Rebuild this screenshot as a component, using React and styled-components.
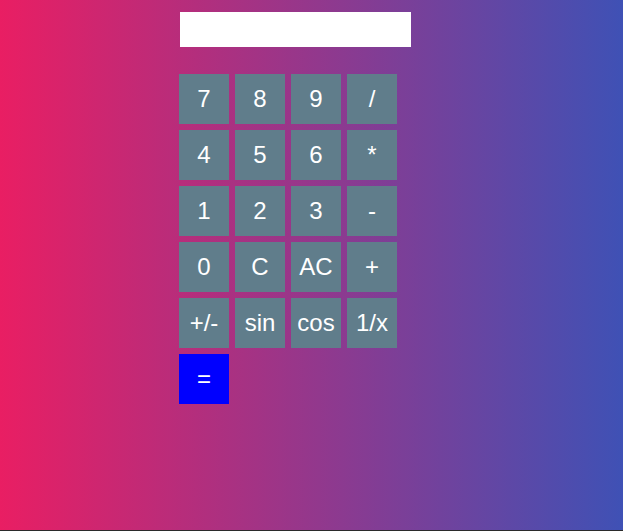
import styled, { createGlobalStyle } from "styled-components";

const GlobalStyle = createGlobalStyle`
    html {
        background: #2b2b2b;
    }
    body {
        margin: 0;
        font-family: "Liberation Sans", Arial, sans-serif;
    }
`;

const Page = styled.div`
    height: 530px;
    background: linear-gradient(to right, #e91e63, #3f51b5);
    padding: 12px 0 0 179px;
    box-sizing: border-box;
`;

const Display = styled.input`
    display: block;
    width: 231px;
    height: 35px;
    margin: 0 0 27px 1px;
    padding: 0 6px;
    border: none;
    outline: none;
    box-sizing: border-box;
    background: #fff;
    font-family: inherit;
    font-size: 20px;
`;

const Keypad = styled.div`
    display: grid;
    grid-template-columns: repeat(4, 50px);
    grid-auto-rows: 50px;
    gap: 6px;
`;

const Key = styled.button`
    border: none;
    padding: 0;
    background: ${(p) => (p.$accent ? "#0000ff" : "#607d8b")};
    color: #fff;
    font-family: inherit;
    font-size: 24px;
    line-height: 1;
    cursor: pointer;
`;

const keys = [
    "7", "8", "9", "/",
    "4", "5", "6", "*",
    "1", "2", "3", "-",
    "0", "C", "AC", "+",
    "+/-", "sin", "cos", "1/x",
];

export default function App() {
    return (
        <>
            <GlobalStyle />
            <Page>
                <Display type="text" />
                <Keypad>
                    {keys.map((k) => (
                        <Key key={k}>{k}</Key>
                    ))}
                    <Key $accent>=</Key>
                </Keypad>
            </Page>
        </>
    );
}
